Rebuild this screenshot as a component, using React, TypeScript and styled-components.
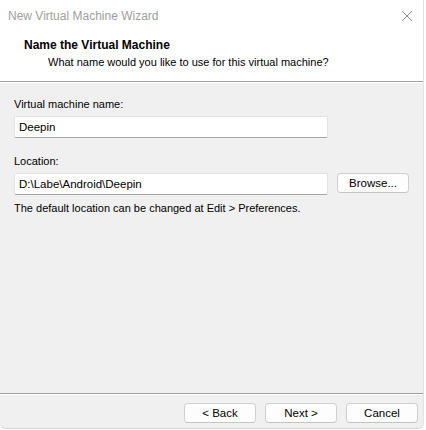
import React from 'react';
import styled, { createGlobalStyle } from 'styled-components';

const GlobalStyle = createGlobalStyle`
  html, body {
    margin: 0;
    padding: 0;
    background: #ffffff;
  }
  body {
    font-family: "Liberation Sans", Arial, sans-serif;
    font-size: 11px;
    color: #000;
  }
`;

const Window = styled.div`
  width: 423px;
  height: 428px;
  display: flex;
  flex-direction: column;
  background: #f0f0f0;
  border-right: 1px solid #e2e2e2;
  border-bottom: 1px solid #d6d6d6;
  border-radius: 0 0 6px 6px;
  overflow: hidden;
`;

const TitleBar = styled.div`
  height: 32px;
  display: flex;
  align-items: center;
  justify-content: space-between;
  padding: 0 8px;
  background: #fff;
  color: #a0a0a0;
  font-size: 12px;
`;

const CloseButton = styled.div`
  width: 12px;
  height: 12px;
  display: flex;
  color: #8c8c8c;
  margin-right: 2px;
`;

const Header = styled.div`
  height: 50px;
  box-sizing: border-box;
  background: #fff;
  padding: 6px 0 0 24px;
  border-bottom: 1px solid #a0a0a0;
  box-shadow: 0 1px 0 #ffffff;
  display: flex;
  flex-direction: column;
  gap: 2px;
`;

const Heading = styled.div`
  font-weight: bold;
  font-size: 12px;
  line-height: 15px;
`;

const Subheading = styled.div`
  padding-left: 24px;
  line-height: 15px;
`;

const Body = styled.div`
  flex: 1;
  padding: 14px 14px 0;
  display: flex;
  flex-direction: column;
`;

const Label = styled.div<{ $top?: number }>`
  line-height: 16px;
  margin-top: ${(p) => p.$top ?? 0}px;
`;

const Row = styled.div`
  display: flex;
  align-items: flex-start;
  gap: 9px;
  margin-top: 4px;
`;

const TextInput = styled.input`
  width: 314px;
  height: 22px;
  box-sizing: border-box;
  padding: 0 4px;
  border: 1px solid #e3e3e3;
  border-bottom-color: #a6a6a6;
  border-radius: 2px;
  background: #fff;
  font: inherit;
  font-size: 11.5px;
  color: #000;
  outline: none;
`;

const Button = styled.button`
  width: 72px;
  height: 20px;
  box-sizing: border-box;
  padding: 0;
  border: 1px solid #d0d0d0;
  border-bottom-color: #c4c4c4;
  border-radius: 4px;
  background: #fdfdfd;
  font: inherit;
  font-size: 11.5px;
  color: #000;
`;

const Note = styled.div`
  line-height: 16px;
  margin-top: 5px;
`;

const Footer = styled.div`
  border-top: 1px solid #a0a0a0;
  box-shadow: inset 0 1px 0 #ffffff;
  padding: 9px 5px 5px 0;
  display: flex;
  justify-content: flex-end;
  gap: 9px;
`;

const App = () => (
  <>
    <GlobalStyle />
    <Window>
      <TitleBar>
        <span>New Virtual Machine Wizard</span>
        <CloseButton>
          <svg width="12" height="12" viewBox="0 0 12 12">
            <path d="M1 1 L11 11 M11 1 L1 11" stroke="currentColor" strokeWidth="1" fill="none" />
          </svg>
        </CloseButton>
      </TitleBar>
      <Header>
        <Heading>Name the Virtual Machine</Heading>
        <Subheading>What name would you like to use for this virtual machine?</Subheading>
      </Header>
      <Body>
        <Label>Virtual machine name:</Label>
        <Row>
          <TextInput defaultValue="Deepin" />
        </Row>
        <Label $top={15}>Location:</Label>
        <Row>
          <TextInput defaultValue="D:\Labe\Android\Deepin" />
          <Button>Browse...</Button>
        </Row>
        <Note>The default location can be changed at Edit &gt; Preferences.</Note>
      </Body>
      <Footer>
        <Button>&lt; Back</Button>
        <Button>Next &gt;</Button>
        <Button>Cancel</Button>
      </Footer>
    </Window>
  </>
);

export default App;
